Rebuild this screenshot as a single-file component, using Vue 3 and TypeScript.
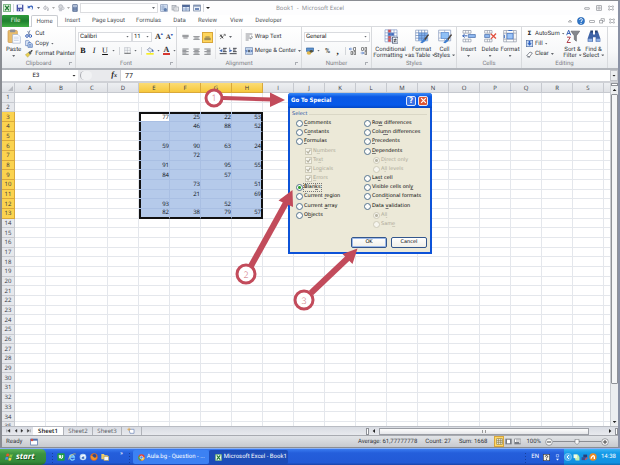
<script setup lang="ts">
import { ref } from 'vue'

const tabs = ['Home', 'Insert', 'Page Layout', 'Formulas', 'Data', 'Review', 'View', 'Developer']
const columns = 'ABCDEFGHIJKLMNOPQRS'.split('')
const rowNumbers = Array.from({ length: 35 }, (_, i) => i + 1)

const values: Record<string, number> = {
  E3: 77, F3: 25, G3: 22, H3: 53,
  F4: 46, G4: 88, H4: 52,
  E6: 59, F6: 90, G6: 63, H6: 24,
  F7: 72,
  E8: 91, G8: 95, H8: 55,
  E9: 84, G9: 57,
  F10: 73, H10: 51,
  F11: 21, H11: 69,
  E12: 93, G12: 52,
  E13: 82, F13: 38, G13: 79, H13: 57,
}

const isCol = (c: string) => c >= 'E' && c <= 'H'
const isRow = (r: number) => r >= 3 && r <= 13

function cellClass(c: string, r: number) {
  const inside = isCol(c) && isRow(r)
  return {
    sel: inside,
    active: c === 'E' && r === 3,
    bt: inside && r === 3,
    bb: inside && r === 13,
    bl: inside && c === 'E',
    br: inside && c === 'H',
  }
}

type Option = { id: string; text: [string, string, string]; kind: 'radio' | 'check'; sub?: boolean }
const left: Option[] = [
  { id: 'comments', text: ['', 'C', 'omments'], kind: 'radio' },
  { id: 'constants', text: ['C', 'o', 'nstants'], kind: 'radio' },
  { id: 'formulas', text: ['', 'F', 'ormulas'], kind: 'radio' },
  { id: 'numbers', text: ['N', 'u', 'mbers'], kind: 'check', sub: true },
  { id: 'text', text: ['Te', 'x', 't'], kind: 'check', sub: true },
  { id: 'logicals', text: ['Lo', 'g', 'icals'], kind: 'check', sub: true },
  { id: 'errors', text: ['', 'E', 'rrors'], kind: 'check', sub: true },
  { id: 'blanks', text: ['Blan', 'k', 's'], kind: 'radio' },
  { id: 'region', text: ['Current ', 'r', 'egion'], kind: 'radio' },
  { id: 'array', text: ['Current ', 'a', 'rray'], kind: 'radio' },
  { id: 'objects', text: ['O', 'b', 'jects'], kind: 'radio' },
]
const right: Option[] = [
  { id: 'rowdiff', text: ['Ro', 'w', ' differences'], kind: 'radio' },
  { id: 'coldiff', text: ['Colu', 'm', 'n differences'], kind: 'radio' },
  { id: 'precedents', text: ['', 'P', 'recedents'], kind: 'radio' },
  { id: 'dependents', text: ['', 'D', 'ependents'], kind: 'radio' },
  { id: 'direct', text: ['D', 'i', 'rect only'], kind: 'radio', sub: true },
  { id: 'levels', text: ['A', 'l', 'l levels'], kind: 'radio', sub: true },
  { id: 'last', text: ['La', 's', 't cell'], kind: 'radio' },
  { id: 'visible', text: ['Visible cells onl', 'y', ''], kind: 'radio' },
  { id: 'conditional', text: ['Condi', 't', 'ional formats'], kind: 'radio' },
  { id: 'validation', text: ['Data ', 'v', 'alidation'], kind: 'radio' },
  { id: 'all', text: ['Al', 'l', ''], kind: 'radio', sub: true },
  { id: 'same', text: ['Sam', 'e', ''], kind: 'radio', sub: true },
]
const lists = [left, right]
const choice = ref('blanks')
const subOn = (id: string) => id === 'direct' || id === 'all'
</script>

<template>
  <div class="screen">
    <div class="window">
      <header class="titlebar">
        <div class="qat">
          <svg class="i8" viewBox="0 0 24 24"><rect x="1" y="1" width="22" height="22" rx="2" fill="#dff0dd" stroke="#2f8a3c" stroke-width="2" /><path d="M6 5l12 14M18 5L6 19" stroke="#1f7a30" stroke-width="4" /><path d="M17 8h4M17 12h4" stroke="#3a9a48" /></svg>
          <i class="vsep"></i>
          <svg class="i8" viewBox="0 0 24 24"><path d="M2 2h20v20H2z" fill="#4a55a8" /><path d="M6 2h12v9H6z" fill="#f3f5fb" /><path d="M7 15h11v7H7z" fill="#c8cde6" /><path d="M9 16h3v5H9z" fill="#333b80" /></svg>
          <svg class="i8" viewBox="0 0 24 24"><path d="M2 4v9h9l-3-3c5-4 9 0 6 9 9-10 3-19-9-12z" fill="#3f68bd" /></svg>
          <b class="caret"></b>
          <svg class="i8" viewBox="0 0 24 24"><path d="M4 12l6-7v4c10-1 12 6 7 12 1-6-2-8-7-7v4z" fill="#e7e7ea" stroke="#a9abb2" stroke-width="2" /></svg>
          <b class="caret pale"></b>
          <svg class="i8" viewBox="0 0 24 24"><circle cx="11" cy="8" r="6" fill="#d6d8dc" stroke="#a4a8b0" stroke-width="2" /><path d="M4 14h14l-4 8H7z" fill="#c6c9cf" /><circle cx="18" cy="13" r="4" fill="#dcdee3" stroke="#a4a8b0" /></svg>
          <b class="caret pale"></b>
          <svg class="calc" viewBox="3 0 18 24"><rect x="4" y="1" width="16" height="22" rx="2" fill="#51678f" /><path d="M6 4h12v4H6z" fill="#dfe9f8" /><path d="M7 11h10M7 15h10M7 19h10" stroke="#a9bddf" stroke-width="2" /></svg>
          <span class="qatbox"><b class="caret"></b></span>
          <svg class="i8" viewBox="0 0 24 24"><rect x="2" y="2" width="20" height="20" fill="#cfdcef" stroke="#8698b8" stroke-width="2" /><path d="M2 9h14M2 15h14M9 2v18" stroke="#8ba3c9" stroke-width="2" /><circle cx="16" cy="17" r="5" fill="#5f7fae" /></svg>
          <svg class="i8" viewBox="0 0 24 24"><rect x="3" y="4" width="12" height="14" fill="#d5d8dd" stroke="#9a9fa8" stroke-width="2" /><rect x="9" y="9" width="13" height="12" fill="#f0f1f3" stroke="#9a9fa8" stroke-width="2" /><path d="M12 13h7M12 17h7" stroke="#9a9fa8" /></svg>
          <svg class="i8" viewBox="0 0 24 24"><rect x="1" y="3" width="22" height="18" fill="#dce7f6" stroke="#52668d" stroke-width="2" /><path d="M1 3h22v6H1z" fill="#50699a" /><path d="M1 15h22M12 9v12" stroke="#7290c0" stroke-width="2" /></svg>
          <svg class="i8" viewBox="0 0 24 24"><rect x="2" y="3" width="20" height="18" fill="#e9eff8" stroke="#6a7b99" stroke-width="2" /><path d="M2 3h20v5H2z" fill="#8496b4" /><path d="M6 12h12v6H6z" fill="#6d88b8" /></svg>
          <i class="vsep"></i>
          <b class="caret dark"></b>
        </div>
        <h1>Book1 &nbsp;- &nbsp;Microsoft Excel</h1>
        <div class="winbtns">
          <button aria-label="Minimize"><svg class="i6" viewBox="0 0 18 18"><rect x="2" y="8" width="14" height="5" rx="1" fill="none" stroke="#8a8d93" stroke-width="2" /></svg></button>
          <button aria-label="Restore"><svg class="i6" viewBox="0 0 18 18"><rect x="2" y="2" width="14" height="14" fill="none" stroke="#8a8d93" stroke-width="2" /><rect x="6" y="6" width="6" height="6" fill="#fff" stroke="#8a8d93" stroke-width="2" /></svg></button>
          <button aria-label="Close"><svg class="i6" viewBox="0 0 18 18"><path d="M2 3h4l3 3 3-3h4v3l-3 3 3 3v3h-4l-3-3-3 3H2v-3l3-3-3-3z" fill="#fff" stroke="#8a8d93" stroke-width="2" /></svg></button>
        </div>
      </header>

      <nav class="tabs">
        <button class="file">File</button>
        <button v-for="(t, i) in tabs" :key="t" :class="['tab', t.split(' ')[0].toLowerCase(), { on: i === 0 }]">{{ t }}</button>
        <div class="tabright">
          <svg class="i6" viewBox="0 0 18 18"><path d="M4 12l5-6 5 6z" fill="#fff" stroke="#888b90" stroke-width="2" /></svg>
          <svg class="i8" viewBox="0 0 24 24"><circle cx="12" cy="12" r="11" fill="#2f76c8" stroke="#2158a0" /><path d="M8 9c0-6 9-5 8 0-1 3-4 3-4 6" fill="none" stroke="#fff" stroke-width="3" /><circle cx="12" cy="19" r="2" fill="#fff" /></svg>
          <svg class="i6" viewBox="0 0 18 18"><rect x="2" y="8" width="14" height="5" fill="none" stroke="#8a8d93" stroke-width="2" /></svg>
          <svg class="i6" viewBox="0 0 18 18"><path d="M6 6V2h10v8h-4" fill="none" stroke="#8a8d93" stroke-width="2" /><rect x="2" y="7" width="9" height="8" fill="#fff" stroke="#8a8d93" stroke-width="2" /></svg>
          <svg class="i6" viewBox="0 0 18 18"><path d="M2 3h4l3 3 3-3h4v3l-3 3 3 3v3h-4l-3-3-3 3H2v-3l3-3-3-3z" fill="#fff" stroke="#8a8d93" stroke-width="2" /></svg>
        </div>
      </nav>

      <section class="ribbon">
        <div class="group clip">
          <div class="body">
            <button class="big">
              <svg class="i14" viewBox="0 0 42 44"><rect x="3" y="4" width="28" height="36" rx="3" fill="#e9bd6d" stroke="#c8964a" stroke-width="2" /><rect x="9" y="1" width="16" height="8" rx="2" fill="#8c8f96" /><path d="M17 16h16l7 7v19H17z" fill="#fbfcff" stroke="#9fb0cf" stroke-width="2" /><path d="M21 24h14M21 29h14M21 34h14" stroke="#b7c6e0" stroke-width="2" /></svg>
              <span>Paste</span><b class="caret"></b>
            </button>
            <div class="stack">
              <button><svg class="i8" viewBox="0 0 24 24"><path d="M15 1L9 15M8 3l6 12" stroke="#8492ae" stroke-width="3" /><circle cx="6" cy="18" r="4" fill="none" stroke="#3c63b8" stroke-width="3" /><circle cx="16" cy="18" r="4" fill="none" stroke="#3c63b8" stroke-width="3" /></svg>Cut</button>
              <button><svg class="i8" viewBox="0 0 24 24"><path d="M2 2h9l3 4v11H2z" fill="#e8f0fc" stroke="#5577b5" stroke-width="2" /><path d="M9 8h9l4 4v10H9z" fill="#cfe0f8" stroke="#3f67ae" stroke-width="2" /><path d="M12 14h7M12 18h7" stroke="#3f67ae" stroke-width="2" /></svg>Copy<b class="caret"></b></button>
              <button><svg class="i8" viewBox="0 0 24 24"><path d="M1 14l10-7 5 6-8 9z" fill="#e9cf52" stroke="#9b9040" /><path d="M10 7l5-4 5 6-5 5z" fill="#55606e" /><path d="M17 5l5-4" stroke="#333" stroke-width="4" /></svg>Format Painter</button>
            </div>
          </div>
          <footer>Clipboard<i class="launch"></i></footer>
        </div>

        <div class="group font">
          <div class="body rows">
            <div class="line">
              <label class="combo wide"><select aria-label="Font name"><option>Calibri</option></select><b class="caret"></b></label>
              <label class="combo size"><select aria-label="Font size"><option>11</option></select><b class="caret"></b></label>
              <button class="grow big1">A<sup>▴</sup></button>
              <button class="grow big2">A<sup>▾</sup></button>
            </div>
            <div class="line fmt">
              <button class="biu"><strong>B</strong></button>
              <button class="biu"><em>I</em></button>
              <button class="biu"><u>U</u></button><b class="caret"></b>
              <i class="vsep"></i>
              <svg class="i7" viewBox="0 0 21 21"><path d="M2 2h17v17H2zM10 2v17M2 10h17" fill="none" stroke="#9aa0aa" stroke-width="2" stroke-dasharray="2 1" /><path d="M1 19h19" stroke="#444" stroke-width="2" /></svg><b class="caret"></b>
              <i class="vsep"></i>
              <svg class="i8" viewBox="0 0 24 24"><path d="M4 8l8-6 8 8-8 6z" fill="#e8edf5" stroke="#607193" stroke-width="2" /><path d="M18 7c6 3 5 7 3 9-3-2-3-5-3-9" fill="#3d66b4" /><path d="M1 18h22v5H1z" fill="#f7ee22" /></svg><b class="caret"></b>
              <button class="acolor">A</button><b class="caret"></b>
            </div>
          </div>
          <footer>Font<i class="launch"></i></footer>
        </div>

        <div class="group align">
          <div class="body">
            <div class="aligns">
              <svg class="i7" viewBox="0 0 21 21"><path d="M1 4h19M1 8h19M4 12h13" stroke="#4d5056" stroke-width="2" /></svg>
              <svg class="i7" viewBox="0 0 21 21"><path d="M1 8h19M4 12h13M1 16h19" stroke="#4d5056" stroke-width="2" /></svg>
              <span class="hot"><svg class="i7" viewBox="0 0 21 21"><path d="M4 9h13M1 13h19M1 17h19" stroke="#4d5056" stroke-width="2" /></svg></span>
              <svg class="i7" viewBox="0 0 21 21"><path d="M1 3h19M1 7h12M1 11h19M1 15h12M1 19h19" stroke="#4d5056" stroke-width="2" /></svg>
              <svg class="i7" viewBox="0 0 21 21"><path d="M1 3h19M4 7h13M1 11h19M4 15h13M1 19h19" stroke="#4d5056" stroke-width="2" /></svg>
              <svg class="i7" viewBox="0 0 21 21"><path d="M1 3h19M8 7h12M1 11h19M8 15h12M1 19h19" stroke="#4d5056" stroke-width="2" /></svg>
            </div>
            <div class="indents">
              <div><svg class="i8" viewBox="0 0 24 24"><path d="M3 18L18 5M14 4l5 0v5" fill="none" stroke="#555" stroke-width="2" /><path d="M4 5l8 11M3 11l5-6" stroke="#333" stroke-width="3" /></svg><b class="caret"></b></div>
              <div>
                <svg class="i8" viewBox="0 0 24 24"><path d="M12 4h11M12 9h8M12 14h11M2 20h21M2 2v3" stroke="#42454d" stroke-width="3" /><path d="M10 6v10l-9-5z" fill="#3c67b7" /></svg>
                <svg class="i8" viewBox="0 0 24 24"><path d="M12 4h11M12 9h8M12 14h11M2 20h21M2 2v3" stroke="#42454d" stroke-width="3" /><path d="M1 6v10l9-5z" fill="#3c67b7" /></svg>
              </div>
            </div>
            <div class="wraps">
              <button><svg class="i8" viewBox="0 0 24 24"><path d="M2 3h20M2 9h12M2 15h16M2 21h9" stroke="#5b5f67" stroke-width="2" /><path d="M18 9c6 0 5 9-3 9" fill="none" stroke="#5b5f67" stroke-width="2" /></svg>Wrap Text</button>
              <button><svg class="i8" viewBox="0 0 24 24"><path d="M1 2h22v20H1z" fill="#cfe0f7" stroke="#59739f" stroke-width="2" /><path d="M3 12h18M6 8l-4 4 4 4M18 8l4 4-4 4" fill="none" stroke="#2f5ba8" stroke-width="2" /><path d="M10 8h4v8h-4z" fill="#444" /></svg>Merge &amp; Center<b class="caret"></b></button>
            </div>
          </div>
          <footer>Alignment<i class="launch"></i></footer>
        </div>

        <div class="group number">
          <div class="body rows">
            <div class="line">
              <label class="combo full"><select aria-label="Number format"><option>General</option></select><b class="caret"></b></label>
            </div>
            <div class="line num">
              <svg class="i8" viewBox="0 0 24 24"><path d="M1 3h22v10H1z" fill="#5d93cf" stroke="#33629c" stroke-width="2" /><ellipse cx="9" cy="18" rx="7" ry="5" fill="#dfb64c" /><ellipse cx="16" cy="13" rx="5" ry="4" fill="#54513c" /></svg><b class="caret"></b>
              <span class="pct">%</span><span class="comma">,</span>
              <i class="vsep"></i>
              <svg class="i8" viewBox="0 0 24 24"><path d="M1 6h9M5 2L1 6l4 4" stroke="#2f62c0" stroke-width="2" fill="none" /><rect x="14" y="2" width="6" height="8" fill="none" stroke="#555" stroke-width="2" /><rect x="6" y="14" width="5" height="8" fill="none" stroke="#555" stroke-width="2" /><rect x="15" y="14" width="5" height="8" fill="none" stroke="#555" stroke-width="2" /></svg>
              <svg class="i8" viewBox="0 0 24 24"><path d="M2 18h9M7 14l4 4-4 4" stroke="#2f62c0" stroke-width="2" fill="none" /><rect x="5" y="2" width="5" height="8" fill="none" stroke="#555" stroke-width="2" /><rect x="15" y="2" width="5" height="8" fill="none" stroke="#555" stroke-width="2" /><rect x="15" y="14" width="5" height="8" fill="none" stroke="#555" stroke-width="2" /></svg>
            </div>
          </div>
          <footer>Number<i class="launch"></i></footer>
        </div>

        <div class="group styles">
          <div class="body bigs">
            <button class="big">
              <svg class="i14" viewBox="0 0 42 44"><path d="M3 2h36v36H3z" fill="#fff" stroke="#7d96c6" stroke-width="2" /><path d="M12 2h9v9h-9zM12 20h9v18h-9z" fill="#e0524c" /><path d="M12 11h18v9H12z" fill="#3f6bc0" /><path d="M3 11h36M3 20h36M3 29h36M12 2v36M21 2v36M30 2v36" stroke="#7d96c6" stroke-width="2" /><rect x="25" y="24" width="17" height="18" fill="#eef3fb" stroke="#3a4664" stroke-width="2" /><path d="M29 31h9M29 36h9M35 28l-4 11" stroke="#333" stroke-width="2" /></svg>
              <span>Conditional</span><span>Formatting<b class="caret"></b></span>
            </button>
            <button class="big">
              <svg class="i14" viewBox="0 0 42 44"><path d="M2 3h36v32H2z" fill="#fff" stroke="#7f93b8" stroke-width="2" /><path d="M11 11h27v24H11z" fill="#7fb0ee" /><path d="M2 11h36M2 19h36M2 27h36M11 3v32M20 3v32M29 3v32" stroke="#5b7fb8" stroke-width="2" /><path d="M40 14L27 30l4 4 10-16z" fill="#4a4038" /><path d="M26 29l6 6-10 7-6-1z" fill="#3f7ed0" /></svg>
              <span>Format</span><span>as Table<b class="caret"></b></span>
            </button>
            <button class="big">
              <svg class="i14" viewBox="0 0 42 44"><path d="M2 3h36v32H2z" fill="#fff" stroke="#7f93b8" stroke-width="2" /><path d="M9 10h23v18H9z" fill="#8fc0f6" stroke="#4b7cc4" stroke-width="2" /><path d="M2 11h7M2 27h7M20 3v7M20 28v7M32 19h6" stroke="#8fa3c8" stroke-width="2" /><path d="M40 14L27 30l4 4 10-16z" fill="#4a4038" /><path d="M26 29l6 6-10 7-6-1z" fill="#3f7ed0" /></svg>
              <span>Cell</span><span>Styles<b class="caret"></b></span>
            </button>
          </div>
          <footer>Styles</footer>
        </div>

        <div class="group cells">
          <div class="body bigs">
            <button class="big">
              <svg class="i14" viewBox="0 0 42 44"><path d="M3 4h24v8H3zM3 30h24v8H3zM11 4v8M19 4v8M11 30v8M19 30v8" fill="#fff" stroke="#8b93a3" stroke-width="2" /><path d="M19 16h21v9H19z" fill="#8fb8f0" stroke="#3f66a8" stroke-width="2" /><path d="M2 20h14M8 15l-6 5 6 5" fill="none" stroke="#3562b8" stroke-width="3" /></svg>
              <span>Insert</span><b class="caret"></b>
            </button>
            <button class="big">
              <svg class="i14" viewBox="0 0 42 44"><path d="M5 4h22v8H5zM5 30h22v8H5zM13 4v8M20 4v8M13 30v8M20 30v8" fill="#fff" stroke="#8b93a3" stroke-width="2" /><path d="M5 16h15v9H5z" fill="#8fb8f0" stroke="#3f66a8" stroke-width="2" /><path d="M23 14l16 14M39 13L24 29" stroke="#e1503f" stroke-width="4" /></svg>
              <span>Delete</span><b class="caret"></b>
            </button>
            <button class="big">
              <svg class="i14" viewBox="0 0 42 44"><path d="M2 4h38v34H2z" fill="#fff" stroke="#8b93a3" stroke-width="2" /><path d="M2 12h38M2 30h38M10 4v34M32 4v34" stroke="#8b93a3" stroke-width="2" /><path d="M12 13h18v16H12z" fill="#9cc4f7" stroke="#3c6fc2" stroke-width="2" /><path d="M16 4h12M4 17v10" stroke="#3c6fc2" stroke-width="3" /></svg>
              <span>Format</span><b class="caret"></b>
            </button>
          </div>
          <footer>Cells</footer>
        </div>

        <div class="group editing">
          <div class="body">
            <div class="stack">
              <button><span class="sigma">Σ</span>AutoSum<b class="caret"></b></button>
              <button><svg class="i7" viewBox="0 0 21 21"><rect x="1" y="1" width="19" height="19" fill="#c9dcf6" stroke="#4e6ca3" stroke-width="2" /><path d="M8 3h5v7h4l-6 7-7-7h4z" fill="#2d60c2" /></svg>Fill<b class="caret"></b></button>
              <button><svg class="i7" viewBox="0 0 21 21"><path d="M2 14L12 3l7 3-9 12z" fill="#fff" stroke="#555b66" stroke-width="2" /><path d="M4 18h8" stroke="#555b66" stroke-width="2" /></svg>Clear<b class="caret"></b></button>
            </div>
            <button class="big">
              <svg class="i14" viewBox="0 0 42 44"><path d="M2 18L8 3l6 15M4 13h8" fill="none" stroke="#3a62b5" stroke-width="3" /><path d="M3 24h10L3 40h11" fill="none" stroke="#b0434e" stroke-width="3" /><path d="M15 6h26L31 20v16l-6-5V20z" fill="#85888e" stroke="#5c5f66" stroke-width="2" /></svg>
              <span>Sort &amp;</span><span>Filter<b class="caret"></b></span>
            </button>
            <button class="big">
              <svg class="i14" viewBox="0 0 42 44"><path d="M9 8h9v8h6V8h9l7 20v10H26V24h-8v14H2V28z" fill="#3e63a6" /><path d="M10 4h8v6h-8zM24 4h8v6h-8z" fill="#24406f" /><path d="M4 29h12v8H4zM28 29h11v8H28z" fill="#8fb0e4" /></svg>
              <span>Find &amp;</span><span>Select<b class="caret"></b></span>
            </button>
          </div>
          <footer>Editing</footer>
        </div>
      </section>

      <section class="formula">
        <div class="namebox"><input aria-label="Name box" value="E3" /><b class="caret dark"></b></div>
        <div class="fx"><i class="pill"></i><em>f<small>x</small></em></div>
        <input class="content" aria-label="Formula" value="77" />
        <i class="drop"><b class="caret dark"></b></i>
      </section>

      <main class="sheet">
        <div class="gridwrap">
          <table>
            <colgroup><col class="rh" /><col v-for="c in columns" :key="c" class="cc" /><col class="rest" /></colgroup>
            <thead>
              <tr><th class="corner"><i></i></th><th v-for="c in columns" :key="c" :class="{ hl: isCol(c) }">{{ c }}</th><th></th></tr>
            </thead>
            <tbody>
              <tr v-for="r in rowNumbers" :key="r">
                <th :class="{ hl: isRow(r) }">{{ r }}</th>
                <td v-for="c in columns" :key="c" :class="cellClass(c, r)">{{ values[c + r] ?? '' }}</td>
                <td></td>
              </tr>
            </tbody>
          </table>
        </div>
        <div class="vscroll">
          <i class="split"></i>
          <i class="arrow"><b class="caret dark up"></b></i>
          <i class="thumb"></i>
          <i class="arrow"><b class="caret dark"></b></i>
        </div>
      </main>

      <div class="sheetbar">
        <div class="navs">
          <svg viewBox="0 0 90 24"><path d="M14 7v9M24 7v9l-7-4.500zM45 7v9l-6-4.500zM57 7v9l6-4.500zM76 7v9l6-4.500zM85 7v9" fill="#333" stroke="#333" /></svg>
        </div>
        <button class="st on">Sheet1</button>
        <button class="st">Sheet2</button>
        <button class="st">Sheet3</button>
        <svg class="newsheet" viewBox="0 0 24 24"><path d="M6 7h15v12H9z" fill="#fff" stroke="#6a83b5" stroke-width="2" /><path d="M6 2v10M1 7h10" stroke="#e2a13a" stroke-width="2" /></svg>
        <i class="slash"></i>
        <div class="hscroll">
          <i class="grip"></i>
          <svg class="i6" viewBox="0 0 18 18"><path d="M12 3v12L5 9z" fill="#222" /></svg>
          <i class="hthumb"><span></span></i>
          <svg class="i6" viewBox="0 0 18 18"><path d="M6 3v12l7-6z" fill="#222" /></svg>
          <i class="grip"></i>
        </div>
      </div>

      <footer class="status">
        <span class="ready">Ready</span>
        <svg class="macro" viewBox="0 0 24 24"><rect x="2" y="3" width="20" height="18" fill="#fff" stroke="#4f70aa" stroke-width="2" /><path d="M2 3h20v5H2z" fill="#4f70aa" /><circle cx="6" cy="6" r="4" fill="#d35146" /></svg>
        <div class="stats"><span>Average: 61,77777778</span><span>Count: 27</span><span>Sum: 1668</span></div>
        <div class="views">
          <i class="v on"><svg class="i7" viewBox="0 0 21 21"><path d="M2 2h17v17H2zM8 2v17M14 2v17M2 8h17M2 13h17" fill="#fff" stroke="#8a7a40" stroke-width="2" /></svg></i>
          <i class="v"><svg class="i7" viewBox="0 0 21 21"><path d="M1 2h19v17H1z" fill="#777b83" /><path d="M6 5h9v11H6z" fill="#fff" /></svg></i>
          <i class="v"><svg class="i7" viewBox="0 0 21 21"><path d="M1 2h19v17H1z" fill="#777b83" /><path d="M3 4h5v8H3zM10 4h4v8h-4zM16 4h3v12h-3z" fill="#fff" /></svg></i>
        </div>
        <span class="zoomtext">100%</span>
        <svg class="i8" viewBox="0 0 24 24"><circle cx="12" cy="12" r="10" fill="#fafafa" stroke="#777a80" stroke-width="2" /><path d="M6 12h12" stroke="#444" stroke-width="3" /></svg>
        <i class="slider"><svg class="i6" viewBox="0 0 18 18"><path d="M3 1h12v10l-6 6-6-6z" fill="#f8f8f8" stroke="#777a80" stroke-width="2" /></svg></i>
        <svg class="i8" viewBox="0 0 24 24"><circle cx="12" cy="12" r="10" fill="#fafafa" stroke="#777a80" stroke-width="2" /><path d="M6 12h12M12 6v12" stroke="#444" stroke-width="3" /></svg>
      </footer>
    </div>

    <div class="taskbar">
      <button class="start">
        <svg viewBox="0 0 30 30"><path d="M5 5c4-3 7-1 9 0l-2 9c-3-2-6-2-9 0z" fill="#e8562e" /><path d="M16 6c3 2 6 2 10 0l-3 9c-3 2-6 1-9 0z" fill="#86c540" /><path d="M2 16c4-2 6-1 9 0l-2 9c-3-2-6-2-9 0z" fill="#4a8fe8" /><path d="M13 17c3 2 6 2 9 0l-2 9c-3 2-6 1-9 0z" fill="#f8cf3c" /></svg>
        start
      </button>
      <i class="dots"></i>
      <div class="quick">
        <svg class="i8" viewBox="0 0 24 24"><rect x="1" y="1" width="22" height="22" rx="2" fill="#1f9d45" /><path d="M7 6v6c0 5 4 6 4 0V7v5c0 6 5 6 6 0V6" fill="none" stroke="#fff" stroke-width="3" /></svg>
        <svg class="i8" viewBox="0 0 24 24"><path d="M20 17c-4 7-15 5-15-4S17 3 19 12H7" fill="none" stroke="#7fd0ff" stroke-width="4" /><path d="M2 20C0 13 15 0 23 3" fill="none" stroke="#f5d04a" stroke-width="2" /></svg>
        <svg class="i8" viewBox="0 0 24 24"><circle cx="12" cy="12" r="10" fill="#b9d7f5" /><path d="M5 8l12-3 3 10-9 5z" fill="#fff" /><path d="M8 12l8-2v7l-6 1z" fill="#3f73c0" /></svg>
        <svg class="i8" viewBox="0 0 24 24"><circle cx="12" cy="12" r="11" fill="#e26a1d" /><circle cx="13" cy="9" r="6" fill="#2b4c96" /><path d="M2 8c3 2 5-1 8 3 2 4 8 5 12 0-1 11-19 16-20-3" fill="#f0932b" /></svg>
        <svg class="i8" viewBox="0 0 24 24"><path d="M1 3h8l2 4h9v12H1z" fill="#eccb6a" /><rect x="9" y="10" width="14" height="12" fill="#f6f8fc" stroke="#b9a25a" stroke-width="2" /></svg>
      </div>
      <span class="more">»</span>
      <i class="dots"></i>
      <button class="task light">
        <svg class="i7" viewBox="0 0 24 24"><circle cx="12" cy="12" r="11" fill="#e04437" /><path d="M12 12L2 7c-4 8 2 16 9 16z" fill="#3fa552" /><path d="M12 12h11c0 7-5 11-11 11z" fill="#f5ce3e" /><circle cx="12" cy="12" r="5" fill="#4b8cf0" stroke="#fff" stroke-width="2" /></svg>
        Aula.bg - Question - ...
      </button>
      <button class="task dark">
        <svg class="i7" viewBox="0 0 24 24"><rect x="1" y="1" width="22" height="22" rx="2" fill="#f0f8ef" stroke="#2f8a3c" stroke-width="2" /><path d="M6 5l12 14M18 5L6 19" stroke="#1f7a30" stroke-width="4" /></svg>
        Microsoft Excel - Book1
      </button>
      <div class="lang"><i class="dots"></i><span>EN</span>
        <svg class="i7" viewBox="0 0 24 24"><rect x="1" y="1" width="22" height="22" fill="#f5f2e6" stroke="#333" stroke-width="2" /><path d="M8 9c0-5 8-5 8 0-1 3-4 3-4 6M12 17v3" fill="none" stroke="#222" stroke-width="3" /></svg>
        <svg class="i7" viewBox="0 0 24 24"><path d="M8 2h8v8H8z" fill="none" stroke="#cfe0ff" stroke-width="2" /><path d="M7 16h10l-5 6z" fill="#fff" /></svg>
      </div>
      <div class="tray">
        <svg class="i8" viewBox="0 0 24 24"><circle cx="12" cy="12" r="11" fill="#4fb0f0" stroke="#bfe4fb" /><path d="M15 6l-6 6 6 6" fill="none" stroke="#fff" stroke-width="3" /></svg>
        <svg class="i7" viewBox="0 0 24 24"><path d="M2 2h15l5 8v12H9z" fill="#c4efb0" /><path d="M2 2h12v12H2z" fill="#effbe9" /></svg>
        <svg class="i7" viewBox="0 0 24 24"><path d="M8 2h13v10H8z" fill="#2a3f7b" /><path d="M2 11h13v10H2z" fill="#384f93" /><path d="M14 20l8-8" stroke="#e04a4a" stroke-width="4" /></svg>
        <svg class="i8" viewBox="0 0 24 24"><circle cx="12" cy="12" r="11" fill="#ee8a1f" /><path d="M6 17c2-9 10-12 10-4v5" fill="none" stroke="#fff" stroke-width="4" /></svg>
        <time>14:38</time>
      </div>
    </div>

    <form class="dialog" role="dialog" aria-label="Go To Special" @submit.prevent>
      <div class="dtitle">
        <span>Go To Special</span>
        <button type="button" class="dq" aria-label="Help">?</button>
        <button type="button" class="dx" aria-label="Close"><svg viewBox="0 0 18 18"><path d="M3 3l12 12M15 3L3 15" stroke="#fff" stroke-width="3" /></svg></button>
      </div>
      <div class="dbody">
        <div class="legend">Select</div>
        <div class="cols">
          <div v-for="(list, k) in lists" :key="k" class="col">
            <label v-for="o in list" :key="o.id" :class="{ sub: o.sub }">
              <span v-if="o.kind === 'check'" class="tick"><input type="checkbox" checked disabled /><svg viewBox="0 0 18 18"><path d="M4 8l4 5 6-9" fill="none" stroke="#b3b09f" stroke-width="3" /></svg></span>
              <input v-else-if="o.sub" type="radio" :name="'sub' + (o.id === 'direct' || o.id === 'levels')" :checked="subOn(o.id)" disabled />
              <input v-else v-model="choice" type="radio" name="special" :value="o.id" />
              <span :class="{ focus: o.id === choice }">{{ o.text[0] }}<u>{{ o.text[1] }}</u>{{ o.text[2] }}</span>
            </label>
          </div>
        </div>
        <div class="actions"><button class="ok">OK</button><button type="button">Cancel</button></div>
      </div>
    </form>

    <svg class="notes" viewBox="0 0 620 465">
      <g fill="#c24b5b" stroke="#c24b5b">
        <path d="M223 98L272 99.500" stroke-width="4" /><path d="M270 92.500L285 100 270 107z" stroke="none" />
        <path d="M251 266L287 201" stroke-width="6" /><path d="M292.500 190L278.500 200.500 293 207z" stroke="none" />
        <path d="M311 293L350 256" stroke-width="6" /><path d="M357.500 248.500L342.500 254 352.500 264z" stroke="none" />
        <g fill="#fff" stroke-width="3"><circle cx="214" cy="98" r="8" /><circle cx="246" cy="274" r="9" /><circle cx="304" cy="300" r="9" /></g>
      </g>
      <g class="nums"><text x="214" y="101">1</text><text x="246" y="278">2</text><text x="304" y="304">3</text></g>
    </svg>
  </div>
</template>

<style>
body { margin: 0; overflow: hidden; }
</style>

<style scoped>
.screen { position: relative; height: 100vh; display: flex; flex-direction: column; overflow: hidden; font: 6px/8px Roboto, "Liberation Sans", sans-serif; text-rendering: geometricPrecision; color: #33363c; background: #fff; }
.screen *, .screen *::before { box-sizing: border-box; }
button { border: 0; padding: 0; margin: 0; background: none; font: inherit; color: inherit; white-space: nowrap; text-rendering: inherit; }
input, select { font: inherit; color: inherit; margin: 0; padding: 0; border: 0; background: none; appearance: none; outline: none; text-rendering: inherit; }
svg { display: block; flex: none; }
.i6 { width: 6px; height: 6px; }
.i7 { width: 7px; height: 7px; }
.i8 { width: 8px; height: 8px; }
.i14 { width: 14px; height: 15px; }
.caret { display: inline-block; flex: none; width: 3px; height: 2px; background: #666a70; clip-path: polygon(0 0, 100% 0, 50% 100%); vertical-align: middle; margin-left: 2px; }
.caret.pale { background: #aaa; }
.caret.dark { width: 4px; background: #222; }
.caret.up { transform: scaleY(-1); }
.vsep { flex: none; width: 1px; height: 8px; background: #d3d6da; }

.window { flex: 1; min-height: 0; display: flex; flex-direction: column; border: solid #8a8d93; border-width: 1px 2px; border-right-color: #8b92a5; background: #fff; }
.titlebar { height: 14px; display: grid; grid-template-columns: 1fr auto 1fr; align-items: center; background: #fdfdfe; }
.qat { display: flex; align-items: center; gap: 2px; padding-left: 1px; }
.qat .i8 + .i8 { margin-left: 1px; }
.qat .caret { margin-left: 0; }
.calc { width: 6px; height: 8px; }
.qatbox { width: 78px; height: 10px; border: 1px solid #dcdde0; background: #fff; display: flex; align-items: center; justify-content: flex-end; padding-right: 2px; }
h1 { margin: 0; font: inherit; font-family: "Open Sans", sans-serif; color: #85888e; }
.winbtns { display: flex; justify-content: flex-end; gap: 6px; padding-right: 4px; }

.tabs { height: 12px; display: flex; border-bottom: 1px solid #d9dbde; color: #4c4f55; }
.tabs button { height: 12px; line-height: 12px; }
.file { width: 27px; background: linear-gradient(#2f9a3c, #1f7f2f 50%, #3fae41); color: #e6f6e2; border-radius: 1px 1px 0 0; }
.tab { width: 29px; }
.tab.on { margin-left: 2px; width: 27px; border: 1px solid #c9ccd1; border-bottom: 0; border-radius: 2px 2px 0 0; background: #fff; }
.tab.page { width: 43px; }
.tab.formulas { width: 37px; }
.tab.data { width: 25px; }
.tab.review { width: 31px; }
.tab.view { width: 27px; }
.tab.developer { width: 37px; }
.tabright { margin-left: auto; display: flex; align-items: center; gap: 4px; padding-right: 3px; }

.ribbon { height: 43px; display: flex; border-bottom: 2px solid #b2b5bb; background: linear-gradient(#fff, #f7f8f9 60%, #e9ebee); }
.group { flex: none; display: flex; flex-direction: column; border-right: 1px solid #d8dadd; }
.body { height: 32px; display: flex; padding-top: 2px; }
.group footer { position: relative; height: 9px; line-height: 9px; text-align: center; color: #7d8086; }
.launch { position: absolute; right: 3px; top: 3px; width: 3px; height: 3px; border: solid #a9acb2; border-width: 1px 0 0 1px; }
.clip { width: 74px; }
.font { width: 101px; }
.align { width: 125px; }
.number { width: 70px; }
.styles { width: 85px; }
.cells { width: 65px; }
.editing { width: 86px; }
.big { display: flex; flex-direction: column; align-items: center; line-height: 6px; }
.big svg { margin-bottom: 3px; }
.big > .caret { margin: 2px 0 0; }
.clip .big { width: 24px; }
.stack { flex: 1; display: grid; grid-template-rows: 9px 11px 10px; align-items: center; justify-items: start; }
.stack button { display: flex; align-items: center; gap: 2px; line-height: 8px; }
.stack .caret { margin-left: 0; }
.rows { flex-direction: column; padding-top: 4px; gap: 3px; }
.line { height: 11px; display: flex; align-items: center; padding-left: 2px; }
.combo { display: flex; align-items: center; height: 10px; border: 1px solid #d9dbdf; background: #fff; padding: 0 2px 0 1px; }
.combo select { flex: 1; min-width: 0; line-height: 8px; height: 8px; color: #222; }
.combo .caret { margin-left: 0; }
.wide { width: 54px; }
.size { width: 20px; }
.full { width: 66px; }
.grow { font: bold 8px/10px "Liberation Serif", serif; color: #333; margin-left: 3px; }
.big2 { font-size: 7px; }
.grow sup { font-size: 4px; line-height: 4px; color: #3a62b5; }
.fmt { gap: 3px; padding-left: 3px; }
.fmt .caret { margin: 0; }
.biu { flex: none; width: 8px; font: 8px/10px "Liberation Serif", serif; color: #111; }
.fmt .vsep { margin: 0 1px; }
.biu strong { font-weight: bold; }
.acolor { width: 8px; height: 9px; font: bold 8px/8px "Liberation Serif", serif; border-bottom: 2px solid #d5372f; color: #333; }
.aligns { display: grid; grid-template: 14px 14px / repeat(3, 11px); place-items: center; padding: 1px 2px 0 3px; border-right: 1px solid #e3e4e7; margin: 0 2px 0 0; }
.hot { width: 11px; height: 11px; display: grid; place-items: center; background: #ffd65c; border: 1px solid #d8a63a; }
.indents { width: 24px; display: grid; grid-template-rows: 14px 14px; align-items: center; padding: 1px 0 0 1px; border-right: 1px solid #e3e4e7; }
.indents div { display: flex; align-items: center; gap: 2px; }
.indents .caret { margin: 0; }
.wraps { display: grid; grid-template-rows: 14px 14px; align-items: center; padding: 1px 0 0 3px; }
.wraps button { display: flex; align-items: center; gap: 2px; }
.wraps .caret { margin-left: 0; }
.num { gap: 3px; padding-left: 4px; }
.num .caret { margin: 0; }
.pct { font-size: 7px; margin-left: 2px; color: #222; }
.comma { font: bold 9px/6px "Liberation Serif", serif; width: 9px; text-align: center; color: #111; }
.bigs { display: grid; grid-auto-flow: column; justify-content: start; }
.styles .bigs { grid-template-columns: 37px 25px 21px; }
.cells .bigs { grid-template-columns: 23px 20px 20px; }
.editing .stack { flex: none; width: 40px; padding-left: 4px; }
.editing .big { width: 21px; }
.sigma { font-weight: bold; width: 7px; color: #222; }

.formula { height: 13px; display: flex; border-bottom: 2px solid #cfd1d6; color: #222; }
.namebox { width: 76px; display: flex; align-items: center; background: #fff; }
.namebox input { width: 68px; text-align: center; }
.fx { width: 43px; display: flex; align-items: center; justify-content: space-between; padding: 0 3px 0 2px; background: #e9eaed; border-right: 1px solid #cfd1d6; }
.pill { width: 12px; height: 9px; border-left: 1px solid #aaacb2; border-radius: 5px; background: #f1f2f4; }
.fx em { font: italic bold 8px/9px "Liberation Serif", serif; }
.fx small { font-size: 6px; }
.content { flex: 1; min-width: 0; padding-left: 4px; font-size: 7px; }
.drop { width: 8px; display: grid; place-items: center; background: #eceef0; border: 1px solid #c4c6cb; }
.drop .caret, .arrow .caret { margin: 0; }

.sheet { flex: 1; min-height: 0; display: flex; font-family: "Open Sans", "Noto Sans", sans-serif; }
.gridwrap { flex: 1; min-width: 0; overflow: hidden; }
table { border-collapse: separate; border-spacing: 0; table-layout: fixed; width: 609px; height: 349px; }
.rh { width: 13px; }
.cc { width: 31px; }
thead tr { height: 10px; }
th, td { padding: 0; font-weight: normal; line-height: 8px; overflow: hidden; border: solid #e4e7ec; border-width: 0 1px 1px 0; }
th { background: #e6e8ec; border-color: #c6c9cf; text-align: center; color: #33363c; }
thead th { height: 10px; background: linear-gradient(#edeff2, #dfe1e5); }
.hl { background: #fbd34f; border-color: #d9a83a; }
thead .hl { background: linear-gradient(#fbdc75, #f7c83c); }
td { text-align: right; color: #0c0f16; }
.corner i { display: block; width: 5px; height: 5px; margin: 2px 0 0 6px; background: #b9bcc2; clip-path: polygon(100% 0, 100% 100%, 0 100%); }
.sel { background: #b5caea; border-color: #a9bfe3; }
.active { background: #fff; }
.bt { box-shadow: inset 0 2px #111; }
.bb { border-bottom: 2px solid #111; line-height: 7px; }
.bl { box-shadow: inset 2px 0 #111; }
.bt.bl { box-shadow: inset 2px 2px #111; }
.br { border-right: 2px solid #111; }
.vscroll { width: 8px; display: flex; flex-direction: column; background: #eceef0; border-left: 1px solid #c9ccd1; }
.split { height: 3px; border: 1px solid #8f9298; background: #fff; }
.arrow { height: 8px; display: grid; place-items: center; }
.thumb { height: 290px; flex: 0 1 290px; border: 1px solid #8f9298; border-radius: 1px; background: #f5f6f7; }
.vscroll .arrow:last-child { margin-top: auto; }

.sheetbar { height: 9px; display: flex; background: linear-gradient(#d9dce3, #e8eaee); border-top: 1px solid #b9bcc3; color: #55585f; font-family: "Open Sans", sans-serif; }
.navs { width: 31px; }
.navs svg { width: 30px; height: 8px; }
.st { width: 29px; height: 8px; line-height: 8px; border-right: 1px solid #b0b3b9; }
.st.on { width: 31px; background: #fff; color: #111; font-weight: 600; }
.newsheet { width: 10px; height: 8px; margin-left: 4px; }
.slash { width: 1px; margin-left: 5px; background: #b0b3b9; }
.hscroll { margin-left: auto; flex: 0 0 252px; display: flex; align-items: center; gap: 2px; }
.grip { flex: none; width: 3px; height: 7px; border: 1px solid #8f9298; background: #fff; }
.hthumb { height: 7px; width: 210px; border: 1px solid #9b9ea5; background: linear-gradient(#fdfdfd, #e6e7ea); display: grid; place-items: center; margin-right: auto; }
.hthumb span { width: 4px; height: 3px; border: solid #999; border-width: 0 1px; }

.status { height: 12px; display: flex; align-items: center; background: linear-gradient(#e2e4e7, #c7cacf); border-top: 1px solid #a8abb1; color: #34373d; padding-right: 9px; }
.ready { width: 28px; padding-left: 4px; }
.macro { width: 8px; height: 8px; }
.stats { margin-left: auto; display: flex; gap: 8px; }
.views { display: flex; gap: 1px; margin-left: 8px; }
.v { width: 8px; height: 9px; display: grid; place-items: center; }
.v.on { background: #ffd968; outline: 1px solid #d8a63a; }
.zoomtext { margin: 0 4px 0 5px; }
.slider { width: 48px; display: grid; place-items: center; background: linear-gradient(#8a8d93, #8a8d93) center / 100% 1px no-repeat; }

.taskbar { height: 17px; flex: none; display: flex; align-items: center; color: #fff; border-top: 1px solid #8fb2f2; background: linear-gradient(#3a7bf0, #245edb 25%, #225ad6 85%, #1a44a8); }
.start { width: 46px; height: 16px; display: flex; align-items: center; gap: 2px; padding-left: 5px; border-radius: 0 5px 5px 0; background: linear-gradient(#5cb25a, #3c9340 30%, #348a38 80%, #256a2a); font: italic bold 8px/14px "Open Sans", sans-serif; text-shadow: 1px 1px #1d4f20; }
.start svg { width: 9px; height: 10px; }
.dots { width: 3px; height: 11px; background: radial-gradient(#173f9d 1px, transparent 1px) 0 0 / 3px 3px; }
.taskbar > .dots { margin-left: 5px; }
.quick { display: flex; gap: 3px; margin-left: 3px; }
.more { margin: -6px 0 0 11px; }
.task { height: 14px; display: flex; align-items: center; gap: 2px; border-radius: 2px; }
.task.light { width: 76px; padding-left: 5px; margin-left: 2px; background: #3c81f3; }
.task.dark { width: 79px; padding-left: 6px; background: #1c4cb8; }
.lang { margin-left: auto; display: flex; align-items: center; gap: 4px; padding-right: 3px; }
.tray { width: 56px; flex: none; height: 16px; display: flex; align-items: center; gap: 1px; background: linear-gradient(#3db4f5, #149ae8 25%, #1191e2 85%, #0d6db5); }
.tray time { margin-left: 3px; }

.dialog { position: absolute; left: 288px; top: 93px; width: 144px; border-radius: 3px 3px 0 0; background: #0c52d8; padding: 0 2px 2px; font: 5px/7px "DejaVu Sans", sans-serif; color: #000; }
.dtitle { height: 15px; margin: 0 -2px; padding: 0 4px 0 3px; border-radius: 3px 3px 0 0; display: flex; align-items: center; gap: 1px; background: linear-gradient(#3d8df8, #0a58e4 25%, #0659ea 80%, #0346c4); color: #fff; font: bold 6px/8px "DejaVu Sans Condensed", "DejaVu Sans", sans-serif; }
.dtitle span { flex: 1; }
.dtitle button { width: 10px; height: 10px; border: 1px solid #dfe8fb; border-radius: 2px; display: grid; place-items: center; }
.dtitle .dq { background: #3c73e4; font-size: 8px; line-height: 8px; }
.dtitle .dx { background: #dd5533; margin-left: 1px; }
.dx svg { width: 7px; height: 7px; }
.dbody { background: #ece9d8; padding: 2px 3px 4px 2px; }
.legend { height: 8px; line-height: 8px; color: #1d4e9e; display: flex; align-items: center; gap: 2px; }
.legend::after { content: ''; flex: 1; height: 1px; background: #dad7c6; }
.cols { display: flex; padding: 1px 0 0 4px; }
.col { flex: none; width: 68px; height: 110px; display: grid; grid-template-rows: repeat(12, 1fr); }
.col + .col { width: 62px; }
.col label { display: flex; align-items: center; gap: 1px; white-space: nowrap; }
.col .sub { padding-left: 9px; color: #aaa796; }
.col input { flex: none; width: 7px; height: 7px; border: 1px solid #55748f; background: #fdfdfb; }
.col input[type='radio'] { border-radius: 50%; }
.col input[type='radio']:checked { background: radial-gradient(#2ea12e 1px, #fdfdfb 2px); }
.col .sub input { border-color: #cfccbb; background: #f6f5ee; }
.col .sub input[type='radio']:checked { background: radial-gradient(#b9b6a6 1px, #f6f5ee 2px); }
.tick { display: grid; }
.tick > * { grid-area: 1 / 1; width: 7px; height: 7px; }
.col u { text-decoration-thickness: 1px; text-decoration-color: #777; text-underline-offset: 1px; }
.col .sub u { text-decoration-color: #cfccbb; }
.focus { outline: 1px dotted #777; }
.actions { display: flex; justify-content: flex-end; gap: 4px; margin-top: 8px; }
.actions button { width: 36px; height: 11px; border: 1px solid #33568c; border-radius: 2px; background: linear-gradient(#fff, #f0efe8); line-height: 9px; }
.actions .ok { box-shadow: inset 0 0 0 1px #9db9ea; }

.notes { position: absolute; left: 0; top: 0; width: 620px; height: 465px; pointer-events: none; }
.nums { font: 300 9px "Open Sans", sans-serif; text-anchor: middle; fill: #cc6672; }
</style>
